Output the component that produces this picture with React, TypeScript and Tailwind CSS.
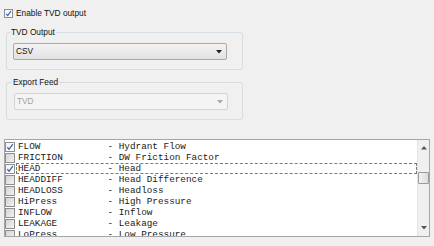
import React from "react";

const items: [string, string, boolean][] = [
  ["FLOW", "Hydrant Flow", true],
  ["FRICTION", "DW Friction Factor", false],
  ["HEAD", "Head", true],
  ["HEADDIFF", "Head Difference", false],
  ["HEADLOSS", "Headloss", false],
  ["HiPress", "High Pressure", false],
  ["INFLOW", "Inflow", false],
  ["LEAKAGE", "Leakage", false],
  ["LoPress", "Low Pressure", false],
  ["OUTFLOW", "Outflow", false],
];

function Check({ checked, size }: { checked: boolean; size: number }) {
  return (
    <div
      className={
        "shrink-0 border border-[#8e8f8f] flex items-center justify-center " +
        (checked
          ? "bg-gradient-to-br from-[#f4f4f4] to-[#ffffff]"
          : "bg-gradient-to-br from-[#d4d4d4] to-[#f2f2f2]")
      }
      style={{ width: size, height: size }}
    >
      {checked && (
        <svg width={size - 2} height={size - 2} viewBox="0 0 8 8">
          <path d="M1.3 4.3 L3.1 6.3 L6.8 1.2" fill="none" stroke="#3a5fb5" strokeWidth="1.3" />
        </svg>
      )}
    </div>
  );
}

function Combo({ value, disabled }: { value: string; disabled?: boolean }) {
  return (
    <div
      className={
        "w-[214px] h-[17px] rounded-[2px] border flex items-center justify-between pl-[2px] pr-[4px] " +
        (disabled
          ? "border-[#d3d3d3] bg-[#f4f4f4] text-[#a3a3a3]"
          : "border-[#a9a9a9] bg-gradient-to-b from-[#f3f3f3] to-[#e2e2e2] text-[#111]")
      }
    >
      <span className="text-[8.3px] leading-none">{value}</span>
      <svg width="6" height="4" viewBox="0 0 6 4">
        <path d="M0 0 H6 L3 3.5 Z" fill={disabled ? "#a9a9a9" : "#222"} />
      </svg>
    </div>
  );
}

function Group({ title, children, titleLeft }: { title: string; children: React.ReactNode; titleLeft: number }) {
  return (
    <div className="relative ml-[6px] w-[237px] h-[38px] border border-[#d5dce2] rounded-[3px] pt-[10px] pl-[6px]">
      <span
        className="absolute top-[-6px] bg-[#f0f0f0] px-[1px] text-[8.3px] leading-[10px] text-[#111]"
        style={{ left: titleLeft }}
      >
        {title}
      </span>
      {children}
    </div>
  );
}

export default function App() {
  return (
    <div
      className="w-[434px] h-[246px] bg-[#f0f0f0] overflow-hidden flex flex-col pt-[9px]"
      style={{ fontFamily: '"Liberation Sans", Arial, sans-serif' }}
    >
      <div className="flex items-center h-[9px] pl-[4px] gap-[3px]">
        <Check checked size={9} />
        <span className="text-[8.3px] leading-none text-[#111]">Enable TVD output</span>
      </div>

      <div className="mt-[14px]">
        <Group title="TVD Output" titleLeft={3}>
          <Combo value="CSV" />
        </Group>
      </div>

      <div className="mt-[12px]">
        <Group title="Export Feed" titleLeft={5}>
          <div className="pl-[1px]">
            <Combo value="TVD" disabled />
          </div>
        </Group>
      </div>

      <div className="mt-[19px] ml-[4px] w-[426px] h-[98px] border border-[#a3a6ab] bg-white flex">
        <div
          className="flex-1 flex flex-col pt-[1px] overflow-hidden text-[9.33px] text-[#1a1a1a]"
          style={{ fontFamily: '"Liberation Mono", "Courier New", monospace' }}
        >
          {items.map(([name, desc, checked]) => (
            <div key={name} className="flex items-center h-[11px] shrink-0">
              <Check checked={checked} size={10} />
              <span
                className={
                  "ml-[1px] flex-1 h-[11px] flex items-center px-[1px] whitespace-pre leading-none " +
                  (name === "HEAD" ? "border border-dashed border-[#7a7a7a]" : "border border-transparent")
                }
              >
                {name.padEnd(16, " ") + "- " + desc}
              </span>
            </div>
          ))}
        </div>
        <div className="w-[12px] bg-[#f0f0f0] border-l border-[#e3e3e3] flex flex-col items-center">
          <svg width="6" height="4" viewBox="0 0 6 4" className="mt-[6px]">
            <path d="M0 3.5 H6 L3 0 Z" fill="#555" />
          </svg>
          <div className="mt-[22px] w-[11px] h-[12px] rounded-[1px] border border-[#9a9a9a] bg-gradient-to-r from-[#f3f3f3] to-[#dcdcdc]" />
          <div className="flex-1" />
          <svg width="6" height="4" viewBox="0 0 6 4" className="mb-[6px]">
            <path d="M0 0 H6 L3 3.5 Z" fill="#555" />
          </svg>
        </div>
      </div>
    </div>
  );
}
